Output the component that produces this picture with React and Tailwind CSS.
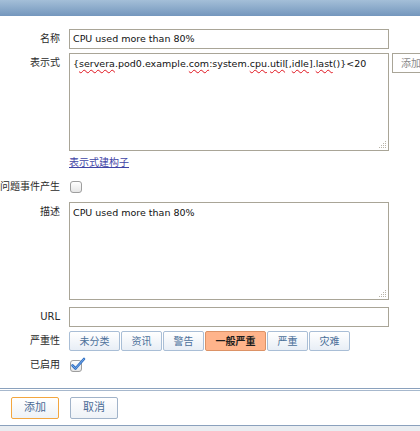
import React from "react";

const font = { fontFamily: '"DejaVu Sans", "Noto Sans CJK SC", sans-serif' };

const Grip = () => (
  <svg className="absolute right-[1px] bottom-[1px]" width="10" height="10" viewBox="0 0 10 10">
    {[
      [8, 2], [6, 4], [8, 4], [4, 6], [6, 6], [8, 6], [2, 8], [4, 8], [6, 8], [8, 8],
    ].map(([x, y], i) => (
      <rect key={i} x={x} y={y} width="1" height="1" fill="#b9b4a8" />
    ))}
  </svg>
);

const Squig = ({ children }) => (
  <span className="underline decoration-wavy decoration-[#e0141e] decoration-[1px] underline-offset-[2px]">
    {children}
  </span>
);

const Label = ({ children, className = "" }) => (
  <div className={"w-[60px] shrink-0 text-right text-[10px] text-[#2a2a2a] whitespace-nowrap " + className}>
    {children}
  </div>
);

const severities = [
  { name: "未分类", w: "w-[51px]" },
  { name: "资讯", w: "w-[41px]" },
  { name: "警告", w: "w-[41px]" },
  { name: "一般严重", w: "w-[61px]", active: true },
  { name: "严重", w: "w-[41px]" },
  { name: "灾难", w: "w-[41px]" },
];

export default function App() {
  return (
    <div className="w-[420px] h-[431px] bg-white flex flex-col overflow-hidden" style={font}>
      <div className="h-4 shrink-0 bg-gradient-to-b from-[#a4bfd8] to-[#7497bd]" />

      <div className="flex-1 pt-[13px]">
        {/* name */}
        <div className="flex items-start gap-[9px]">
          <Label className="leading-[20px]">名称</Label>
          <div className="shrink-0 w-[320px] h-[20px] border border-[#a9a597] px-[3px] text-[9.5px] leading-[18px] text-[#111]">
            CPU used more than 80%
          </div>
        </div>

        {/* expression */}
        <div className="flex items-start gap-[9px] mt-[4px]">
          <Label className="leading-[20px]">表示式</Label>
          <div className="relative shrink-0 w-[320px] h-[98px] border border-[#a9a597] px-[3px] pt-[3px] text-[9.5px] leading-[14px] text-[#111] whitespace-nowrap overflow-hidden">
            {"{"}<Squig>servera</Squig>.pod0.example.<Squig>com</Squig>:system.<Squig>cpu</Squig>.<Squig>util</Squig>[,<Squig>idle</Squig>].<Squig>last</Squig>()}{"<20"}
            <Grip />
          </div>
          <button className="shrink-0 -ml-[6px] h-[20px] px-[8px] border border-[#a9a597] bg-white text-[10px] text-[#8a8a8a] whitespace-nowrap">
            添加
          </button>
        </div>

        {/* builder link */}
        <div className="flex gap-[9px] mt-[4px]">
          <div className="w-[60px] shrink-0" />
          <a href="#" className="text-[10px] leading-[16px] text-[#3f44a5] underline">
            表示式建构子
          </a>
        </div>

        {/* multiple events */}
        <div className="flex items-center gap-[9px] mt-[8px] h-[16px]">
          <Label className="leading-[16px] flex justify-end">问题事件产生</Label>
          <div className="shrink-0 ml-[1px] w-[12px] h-[12px] rounded-[3px] border border-[#9e9e9e] bg-gradient-to-b from-white to-[#e6e6e6]" />
        </div>

        {/* description */}
        <div className="flex items-start gap-[9px] mt-[7px]">
          <Label className="leading-[20px]">描述</Label>
          <div className="relative shrink-0 w-[320px] h-[98px] border border-[#a9a597] px-[3px] pt-[3px] text-[9.5px] leading-[14px] text-[#111]">
            CPU used more than 80%
            <Grip />
          </div>
        </div>

        {/* url */}
        <div className="flex items-start gap-[9px] mt-[7px]">
          <Label className="leading-[20px]">URL</Label>
          <div className="shrink-0 w-[320px] h-[20px] border border-[#a9a597]" />
        </div>

        {/* severity */}
        <div className="flex items-start gap-[9px] mt-[4px]">
          <Label className="leading-[20px]">严重性</Label>
          <div className="flex gap-[1px]">
            {severities.map((s) => (
              <div
                key={s.name}
                className={
                  s.w +
                  " shrink-0 h-[20px] flex items-center justify-center rounded-[2px] border text-[10px] " +
                  (s.active
                    ? "bg-[#ffb48b] border-[#dc9266] text-[#1e1e1e] font-bold"
                    : "bg-gradient-to-b from-white to-[#e8eef6] border-[#a9bed6] text-[#4a6f99]")
                }
              >
                {s.name}
              </div>
            ))}
          </div>
        </div>

        {/* enabled */}
        <div className="flex items-center gap-[9px] mt-[5px] h-[18px]">
          <Label className="leading-[18px]">已启用</Label>
          <svg width="16" height="16" viewBox="0 0 16 16" className="shrink-0 ml-[1px]">
            <defs>
              <linearGradient id="cb" x1="0" y1="0" x2="0" y2="1">
                <stop offset="0" stopColor="#ffffff" />
                <stop offset="1" stopColor="#e4e4e4" />
              </linearGradient>
            </defs>
            <rect x="0.5" y="3.5" width="11" height="11" rx="2.5" fill="url(#cb)" stroke="#9e9e9e" />
            <path d="M2.5 8.5 L5.5 11.5 L14 2" fill="none" stroke="#2f6fc4" strokeWidth="2.6" strokeLinecap="round" strokeLinejoin="round" />
            <path d="M2.5 8.5 L5.5 11.5 L14 2" fill="none" stroke="#7fb0ea" strokeWidth="0.9" strokeLinecap="round" strokeLinejoin="round" />
          </svg>
        </div>
      </div>

      {/* footer */}
      <div className="h-[43px] shrink-0 flex flex-col">
        <div className="h-[1px] bg-[#8aa1bd]" />
        <div className="h-[1px] bg-white" />
        <div className="h-[1px] bg-[#a7b8cd]" />
        <div className="flex gap-[11px] pl-[11px] pt-[6px] h-[34px]">
          <button className="w-[48px] h-[22px] rounded-[2px] border border-[#f3a63f] bg-gradient-to-b from-white to-[#eef2f7] text-[11px] text-[#4b6b95]">
            添加
          </button>
          <button className="w-[48px] h-[22px] rounded-[2px] border border-[#a1b3c9] bg-gradient-to-b from-white to-[#eef2f7] text-[11px] text-[#4b6b95]">
            取消
          </button>
        </div>
        <div className="h-[1px] bg-[#8aa1bd]" />
        <div className="flex-1 bg-[#e9edf1]" />
      </div>
    </div>
  );
}
